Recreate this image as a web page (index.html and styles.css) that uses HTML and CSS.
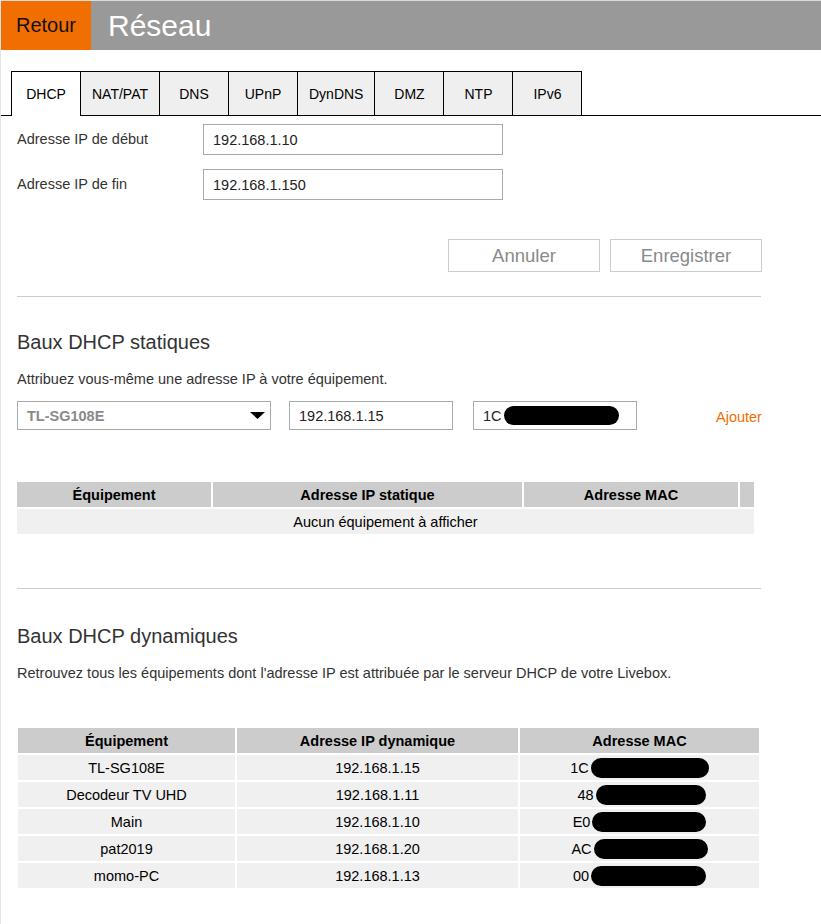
FILE: index.html
```html
<!DOCTYPE html>
<html lang="fr">
<head>
<meta charset="utf-8">
<title>Réseau</title>
<link rel="stylesheet" href="styles.css">
</head>
<body>
<div class="page">
  <header class="topbar">
    <a class="back">Retour</a>
    <h1 class="title">Réseau</h1>
  </header>

  <nav class="tabs">
    <span class="tab active">DHCP</span>
    <span class="tab">NAT/PAT</span>
    <span class="tab">DNS</span>
    <span class="tab">UPnP</span>
    <span class="tab">DynDNS</span>
    <span class="tab">DMZ</span>
    <span class="tab">NTP</span>
    <span class="tab">IPv6</span>
  </nav>

  <main class="content">
    <section class="form">
      <div class="field">
        <label class="field-label">Adresse IP de début</label>
        <div class="box field-box">192.168.1.10</div>
      </div>
      <div class="field">
        <label class="field-label">Adresse IP de fin</label>
        <div class="box field-box">192.168.1.150</div>
      </div>
    </section>

    <div class="actions">
      <button class="btn">Annuler</button>
      <button class="btn">Enregistrer</button>
    </div>

    <hr class="sep sep-first">

    <h2 class="section-title first-title">Baux DHCP statiques</h2>
    <p class="section-desc">Attribuez vous-même une adresse IP à votre équipement.</p>

    <div class="add-row">
      <div class="box select">
        <span class="select-value">TL-SG108E</span>
        <svg class="select-arrow" width="15" height="7" viewBox="0 0 15 7"><path d="M0 0H15L7.5 7Z" fill="#000"/></svg>
      </div>
      <div class="box small-box">192.168.1.15</div>
      <div class="box small-box mac-box">1C<span class="redact redact-input"></span></div>
      <a class="add-link">Ajouter</a>
    </div>

    <div class="grid static-grid">
      <div class="th">Équipement</div>
      <div class="th">Adresse IP statique</div>
      <div class="th">Adresse MAC</div>
      <div class="th"></div>
      <div class="td td-empty">Aucun équipement à afficher</div>
    </div>

    <hr class="sep sep-second">

    <h2 class="section-title second-title">Baux DHCP dynamiques</h2>
    <p class="section-desc">Retrouvez tous les équipements dont l'adresse IP est attribuée par le serveur DHCP de votre Livebox.</p>

    <div class="grid dyn-grid">
      <div class="th">Équipement</div>
      <div class="th">Adresse IP dynamique</div>
      <div class="th">Adresse MAC</div>

      <div class="td">TL-SG108E</div>
      <div class="td">192.168.1.15</div>
      <div class="td">1C<span class="redact" style="width:118px"></span></div>

      <div class="td">Decodeur TV UHD</div>
      <div class="td">192.168.1.11</div>
      <div class="td td-shift">48<span class="redact" style="width:110px"></span></div>

      <div class="td">Main</div>
      <div class="td">192.168.1.10</div>
      <div class="td">E0<span class="redact" style="width:114px"></span></div>

      <div class="td">pat2019</div>
      <div class="td">192.168.1.20</div>
      <div class="td">AC<span class="redact" style="width:114px"></span></div>

      <div class="td">momo-PC</div>
      <div class="td">192.168.1.13</div>
      <div class="td">00<span class="redact" style="width:115px"></span></div>
    </div>
  </main>
</div>
</body>
</html>
```

FILE: styles.css
```css
* {
  box-sizing: border-box;
}

html,
body {
  margin: 0;
  padding: 0;
  background: #ffffff;
}

body {
  font-family: "Liberation Sans", Arial, sans-serif;
  font-size: 14.5px;
  color: #333333;
}

.page {
  border-top: 1px solid #dcdcdc;
  border-left: 1px solid #e4e4e4;
  min-height: 924px;
}

/* Top bar */
.topbar {
  display: flex;
  height: 49px;
  background: #999999;
}

.back {
  width: 90px;
  background: #f16e00;
  color: #111111;
  font-size: 20px;
  display: flex;
  align-items: center;
  justify-content: center;
  text-decoration: none;
}

.title {
  margin: 0;
  padding-left: 17px;
  color: #ffffff;
  font-size: 30px;
  font-weight: normal;
  display: flex;
  align-items: center;
}

/* Tabs */
.tabs {
  display: flex;
  margin-top: 21px;
  padding-left: 10px;
  border-bottom: 1px solid #000000;
}

.tab {
  height: 44px;
  min-width: 69px;
  padding: 0 11px;
  background: #efefef;
  border-top: 1px solid #000000;
  border-right: 1px solid #000000;
  display: flex;
  align-items: center;
  justify-content: center;
  color: #000000;
  font-size: 14px;
}

.tab:first-child {
  border-left: 1px solid #000000;
  min-width: 70px;
}

.tab.active {
  background: #ffffff;
  height: 45px;
  margin-bottom: -1px;
}

/* Content */
.content {
  width: 761px;
  padding-left: 16px;
}

.box {
  border: 1px solid #a9a9a9;
  background: #ffffff;
  display: flex;
  align-items: center;
  padding-left: 9px;
  color: #222222;
  font-size: 14.5px;
}

.form {
  padding-top: 8px;
  display: flex;
  flex-direction: column;
  gap: 14px;
}

.field {
  display: flex;
  align-items: center;
  height: 31px;
}

.field-label {
  width: 186px;
  color: #333333;
  margin-top: -1px;
}

.field-box {
  width: 300px;
  height: 31px;
}

.actions {
  margin-top: 39px;
  display: flex;
  justify-content: flex-end;
  gap: 10px;
}

.btn {
  width: 152px;
  height: 33px;
  border: 1px solid #cccccc;
  background: #ffffff;
  color: #8a8a8a;
  font-family: inherit;
  font-size: 18.5px;
  padding: 0;
}

.sep {
  border: 0;
  border-top: 1px solid #cccccc;
  width: 744px;
  margin: 0;
}

.sep-first {
  margin-top: 24px;
}

.sep-second {
  margin-top: 54px;
}

.section-title {
  margin: 0;
  font-size: 20px;
  line-height: 24px;
  font-weight: normal;
  color: #333333;
}

.first-title {
  margin-top: 33px;
}

.second-title {
  margin-top: 35px;
}

.section-desc {
  margin: 15px 0 0;
  line-height: 20px;
  color: #333333;
}

/* Add static lease row */
.add-row {
  margin-top: 12px;
  display: flex;
  align-items: center;
  height: 29px;
}

.select {
  width: 254px;
  height: 29px;
  justify-content: space-between;
  padding-right: 5px;
}

.select-value {
  font-weight: bold;
  color: #8a8a8a;
}

.select-arrow {
  display: block;
}

.small-box {
  width: 164px;
  height: 29px;
  margin-left: 18px;
}

.mac-box {
  margin-left: 20px;
}

.add-link {
  margin-left: 79px;
  margin-top: 3px;
  color: #f16e00;
  font-size: 14.5px;
}

.redact {
  display: inline-block;
  height: 20px;
  border-radius: 10px;
  background: #000000;
  margin-left: 2px;
}

.redact-input {
  width: 115px;
  height: 19px;
  margin-left: 2px;
}

/* Tables */
.grid {
  display: grid;
  gap: 2px;
  grid-auto-rows: 25px;
  color: #000000;
}

.static-grid {
  margin-top: 52px;
  width: 737px;
  grid-template-columns: 194px 309px 214px 14px;
}

.dyn-grid {
  margin-top: 45px;
  margin-left: 1px;
  width: 741px;
  grid-template-columns: 217px 281px 239px;
}

.th {
  background: #cccccc;
  font-weight: bold;
  display: flex;
  align-items: center;
  justify-content: center;
}

.td {
  background: #f0f0f0;
  display: flex;
  align-items: center;
  justify-content: center;
}

.td-empty {
  grid-column: 1 / -1;
}

.td-shift {
  padding-left: 4px;
}
```
